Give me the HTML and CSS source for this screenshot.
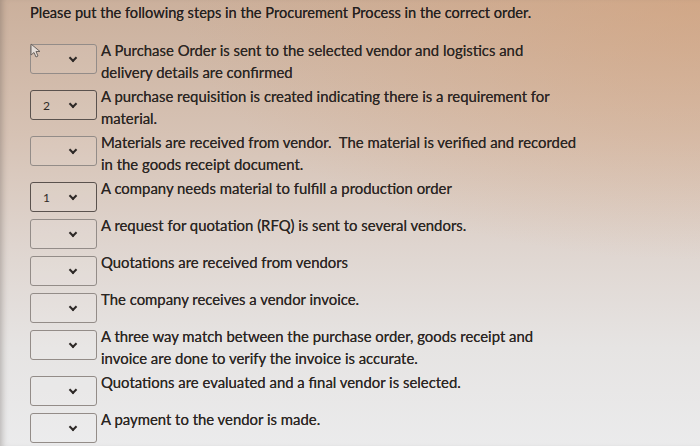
FILE: index.html
```html
<!DOCTYPE html>
<html>
<head>
    <link rel="stylesheet" href="styles.css">
    <title>Procurement Process</title>
</head>
<body>
    <div class="screen">
        <p class="question">Please put the following steps in the Procurement Process in the correct order.</p>
        <div class="steps">
            <div class="step">
                <div class="pick"><span class="val"></span><span class="caret"></span></div>
                <div class="txt">A Purchase Order is sent to the selected vendor and logistics and<br>delivery details are confirmed</div>
            </div>
            <div class="step">
                <div class="pick set"><span class="val">2</span><span class="caret"></span></div>
                <div class="txt">A purchase requisition is created indicating there is a requirement for<br>material.</div>
            </div>
            <div class="step">
                <div class="pick"><span class="val"></span><span class="caret"></span></div>
                <div class="txt">Materials are received from vendor.&nbsp; The material is verified and recorded<br>in the goods receipt document.</div>
            </div>
            <div class="step">
                <div class="pick set"><span class="val">1</span><span class="caret"></span></div>
                <div class="txt">A company needs material to fulfill a production order</div>
            </div>
            <div class="step">
                <div class="pick"><span class="val"></span><span class="caret"></span></div>
                <div class="txt">A request for quotation (RFQ) is sent to several vendors.</div>
            </div>
            <div class="step">
                <div class="pick"><span class="val"></span><span class="caret"></span></div>
                <div class="txt">Quotations are received from vendors</div>
            </div>
            <div class="step">
                <div class="pick"><span class="val"></span><span class="caret"></span></div>
                <div class="txt">The company receives a vendor invoice.</div>
            </div>
            <div class="step">
                <div class="pick"><span class="val"></span><span class="caret"></span></div>
                <div class="txt">A three way match between the purchase order, goods receipt and<br>invoice are done to verify the invoice is accurate.</div>
            </div>
            <div class="step">
                <div class="pick"><span class="val"></span><span class="caret"></span></div>
                <div class="txt">Quotations are evaluated and a final vendor is selected.</div>
            </div>
            <div class="step">
                <div class="pick"><span class="val"></span><span class="caret"></span></div>
                <div class="txt">A payment to the vendor is made.</div>
            </div>
        </div>
        <!-- mouse pointer -->
        <svg class="pointer" width="12" height="16" viewBox="0 0 12 16">
            <path d="M1 1 L1 12 L4 9.5 L6 14 L8 13 L6 8.5 L10 8.5 Z" fill="#e4ddd8" stroke="#6b6460" stroke-width="1"/>
        </svg>
    </div>
</body>
</html>
```

FILE: styles.css
```css
html, body{
    margin: 0;
    padding: 0;
}
body{
    width: 700px;
    height: 446px;
    overflow: hidden;
    font-family: Lato, "Open Sans", sans-serif;
    color: #2a2522;
}
.screen{
    position: relative;
    height: 446px;
    box-sizing: border-box;
    padding: 3px 0 0 30px;
    background:
        radial-gradient(ellipse 520px 260px at 100% 0%, rgba(214, 160, 118, 0.55), rgba(214, 160, 118, 0) 100%),
        linear-gradient(to bottom, #cbb09c 0%, #d6c2b4 30%, #dfd5cf 55%, #e6e4e3 78%, #ebebec 100%);
    box-shadow: inset 6px 0 6px -4px rgba(90, 80, 75, 0.35);
}
.question{
    margin: 0;
    font-size: 14.6px;
    line-height: 20px;
    color: #24201e;
    text-shadow: 0 0 0.4px rgba(36, 32, 30, 0.8);
}
.steps{
    display: flex;
    flex-direction: column;
    gap: 2px;
    margin-top: 16px;
}
.step{
    display: flex;
    align-items: flex-start;
}
.pick{
    box-sizing: border-box;
    width: 67px;
    height: 30px;
    margin-top: 5px;
    border: 1px solid #938c88;
    border-radius: 3px;
    display: flex;
    align-items: center;
    padding: 0 0 0 12px;
    background: rgba(255, 255, 255, 0.08);
}
.pick.set{
    border-color: #5a524e;
}
.val{
    width: 27px;
    font-size: 12px;
    color: #2f2a27;
}
.caret{
    width: 4px;
    height: 4px;
    margin-top: -3px;
    border-right: 2px solid #2d2826;
    border-bottom: 2px solid #2d2826;
    transform: rotate(45deg);
}
.txt{
    margin-left: 4px;
    font-size: 14.9px;
    line-height: 22px;
    white-space: nowrap;
    text-shadow: 0 0 0.4px rgba(42, 37, 34, 0.8);
}
.pointer{
    position: absolute;
    left: 30px;
    top: 43px;
}
```
